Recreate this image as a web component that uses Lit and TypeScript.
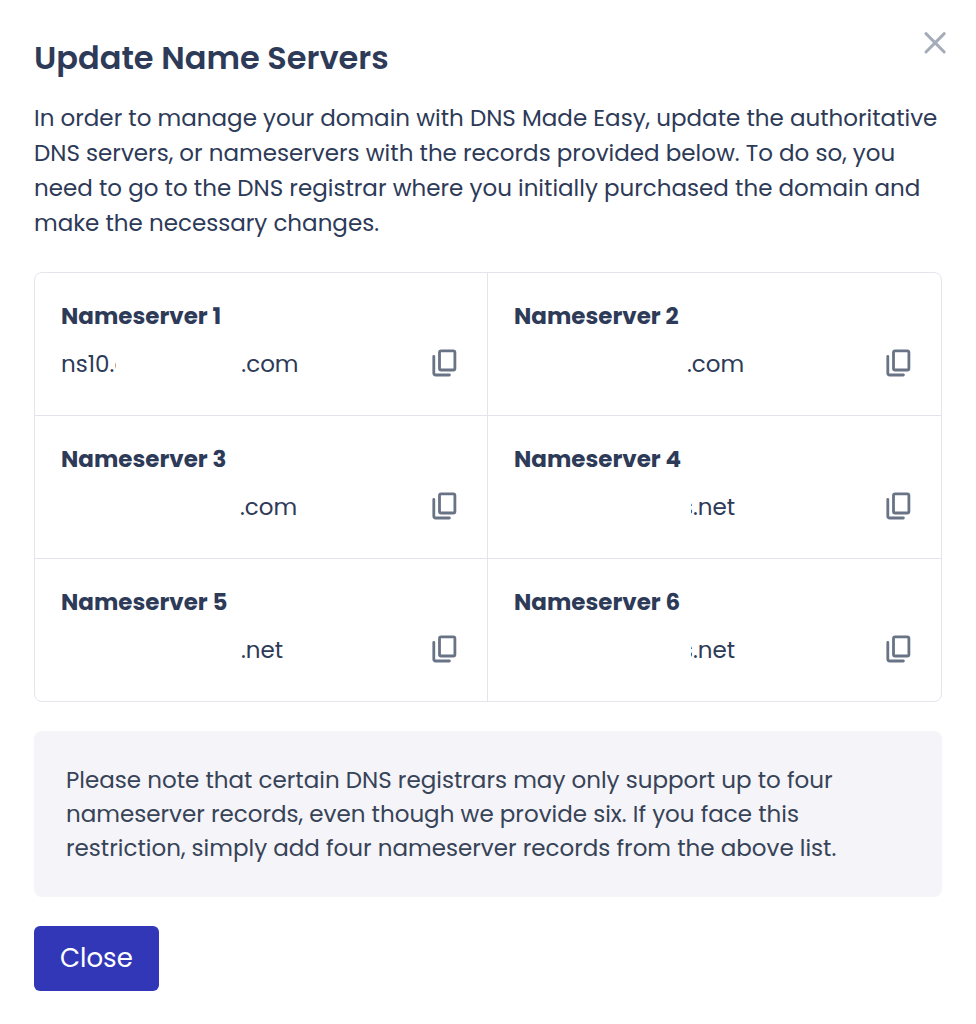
import { LitElement, html, css, nothing } from "lit";
import { customElement, property } from "lit/decorators.js";

interface NameServer {
  id: number;
  host: string;
  /** Width of the block that hides part of the host name. */
  hidden: number;
  /** Letter that the block partly covers, before or after it. */
  before?: string;
  after?: string;
  tld: string;
}

const SERVERS: NameServer[] = [
  { id: 1, host: "ns10.", hidden: 125, before: "c", tld: ".com" },
  { id: 2, host: "", hidden: 173, tld: ".com" },
  { id: 3, host: "", hidden: 179, tld: ".com" },
  { id: 4, host: "", hidden: 177, after: "s", tld: ".net" },
  { id: 5, host: "", hidden: 180, tld: ".net" },
  { id: 6, host: "", hidden: 177, after: "s", tld: ".net" },
];

@customElement("name-server-cell")
export class NameServerCell extends LitElement {
  @property({ attribute: false }) server!: NameServer;

  static styles = css`
    :host {
      display: block;
      padding: 25px 29px 31px 26px;
    }
    .name {
      margin: 0;
      font-size: 23px;
      font-weight: 700;
      line-height: 36px;
    }
    .row {
      display: flex;
      align-items: center;
      justify-content: space-between;
      margin-top: 10px;
    }
    .value {
      display: flex;
      line-height: 40px;
    }
    .mask {
      position: relative;
      background: #fff;
    }
    .over-before {
      margin-left: -12px;
    }
    .over-after {
      margin-right: -10px;
    }
    .copy {
      display: flex;
      padding: 0 0 2px;
      border: 0;
      background: none;
      color: #697386;
      cursor: pointer;
    }
  `;

  render() {
    const { id, host, hidden, before, after, tld } = this.server;
    const overlap = before ? "over-before" : after ? "over-after" : "";
    return html`
      <h2 class="name">Nameserver ${id}</h2>
      <div class="row">
        <span class="value"
          ><span>${host}${before ?? nothing}</span><span class="mask ${overlap}" style="width:${hidden}px"></span
          ><span>${after ?? nothing}${tld}</span></span
        >
        <button class="copy" type="button" aria-label="Copy nameserver ${id}">
          <svg width="28" height="30" viewBox="0 0 28 30" fill="none" stroke="currentColor" stroke-width="2.8" stroke-linecap="round" stroke-linejoin="round">
            <rect x="9.5" y="2.8" width="15.4" height="19.2" rx="1.6" />
            <path d="M3.8 8.4V25Q3.8 27 5.8 27H19.4" />
          </svg>
        </button>
      </div>
    `;
  }
}

@customElement("app-root")
export class AppRoot extends LitElement {
  static styles = css`
    :host {
      display: block;
      min-height: 100vh;
      background: #fff;
      color: #2d3a58;
      font-family: Poppins, Inter, sans-serif;
      font-size: 23px;
    }
    .header {
      display: flex;
      justify-content: space-between;
      align-items: flex-start;
      padding: 31px 29px 0 34px;
    }
    .title {
      margin: 0;
      font-size: 32px;
      font-weight: 600;
      line-height: 54px;
    }
    .dismiss {
      display: flex;
      padding: 0;
      border: 0;
      background: none;
      color: #a5acb9;
      cursor: pointer;
    }
    .body {
      padding: 16px 34px 32px;
    }
    .intro {
      margin: 0 0 31px;
      line-height: 35px;
    }
    .grid {
      display: grid;
      grid-template-columns: 1fr 1fr;
      border: 1px solid #e4e5ec;
      border-radius: 8px;
    }
    .cell:nth-child(odd) {
      border-right: 1px solid #e4e5ec;
    }
    .cell:nth-child(n + 3) {
      border-top: 1px solid #e4e5ec;
    }
    .note {
      margin: 29px 0;
      padding: 32px;
      border-radius: 8px;
      background: #f4f4f9;
      color: #374357;
      line-height: 34px;
    }
    .close {
      display: block;
      padding: 14px 26px;
      border: 0;
      border-radius: 6px;
      background: #3137b7;
      color: #fff;
      font: inherit;
      font-size: 26px;
      line-height: 37px;
      cursor: pointer;
    }
  `;

  render() {
    return html`
      <header class="header">
        <h1 class="title">Update Name Servers</h1>
        <button class="dismiss" type="button" aria-label="Close dialog">
          <svg width="24" height="24" viewBox="0 0 24 24" fill="none" stroke="currentColor" stroke-width="3" stroke-linecap="round">
            <path d="M3 2.6L21.2 21M21.2 2.6L3 21" />
          </svg>
        </button>
      </header>
      <main class="body">
        <p class="intro">
          In order to manage your domain with DNS Made Easy, update the authoritative DNS servers, or
          nameservers with the records provided below. To do so, you need to go to the DNS registrar
          where you initially purchased the domain and make the necessary changes.
        </p>
        <section class="grid">
          ${SERVERS.map((s) => html`<name-server-cell class="cell" .server=${s}></name-server-cell>`)}
        </section>
        <p class="note">
          Please note that certain DNS registrars may only support up to four nameserver records, even
          though we provide six. If you face this restriction, simply add four nameserver records from
          the above list.
        </p>
        <button class="close" type="button">Close</button>
      </main>
    `;
  }
}
